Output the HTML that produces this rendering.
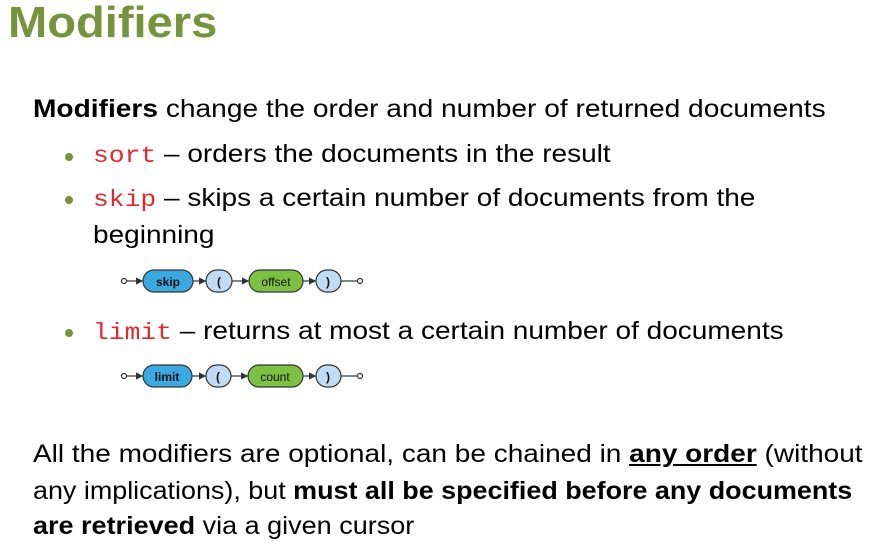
<html><head><style>
body{margin:0;width:873px;height:553px;background:#fff;font-family:"Liberation Sans",sans-serif;color:#000;position:relative;overflow:hidden}
.a{position:absolute;white-space:nowrap;font-size:25px;transform-origin:0 50%}
.m{font-family:"Liberation Mono",monospace;color:#e0282e;font-size:23.5px}
.dot{position:absolute;width:8px;height:8px;border-radius:50%;background:#77933c}
</style></head><body>
<div class="a" style="left:8px;top:-2px;font-size:44px;font-weight:bold;color:#77933c;transform:scaleX(1.07)">Modifiers</div>
<div class="a" style="left:33px;top:95px;transform:scaleX(1.125)"><b>Modifiers</b> change the order and number of returned documents</div>
<div class="dot" style="left:65px;top:153px"></div>
<div class="a" style="left:93px;top:140px;transform:scaleX(1.12)"><span class="m">sort</span> – orders the documents in the result</div>
<div class="dot" style="left:65px;top:196px"></div>
<div class="a" style="left:93px;top:184px;transform:scaleX(1.12)"><span class="m">skip</span> – skips a certain number of documents from the</div>
<div class="a" style="left:93px;top:221px;transform:scaleX(1.12)">beginning</div>
<div class="dot" style="left:65px;top:329px"></div>
<div class="a" style="left:93px;top:317px;transform:scaleX(1.12)"><span class="m">limit</span> – returns at most a certain number of documents</div>
<svg width="873" height="553" style="position:absolute;left:0;top:0" font-family="Liberation Sans" font-size="12">
<defs><marker id="ar" markerWidth="6" markerHeight="6" refX="5" refY="3" orient="auto"><path d="M0,0L6,3L0,6z" fill="#333"/></marker></defs>
<g stroke="#333" stroke-width="1.2">
<circle cx="124" cy="281" r="2.5" fill="#fff"/>
<line x1="127" y1="281" x2="142" y2="281" marker-end="url(#ar)"/>
<rect x="143" y="270" width="50" height="22" rx="11" fill="#3aa9e0"/>
<line x1="193" y1="281" x2="205" y2="281" marker-end="url(#ar)"/>
<rect x="206" y="270" width="26" height="22" rx="11" fill="#bfdcf4"/>
<line x1="232" y1="281" x2="248" y2="281" marker-end="url(#ar)"/>
<rect x="249" y="270" width="54" height="22" rx="11" fill="#7dc142"/>
<line x1="303" y1="281" x2="315" y2="281" marker-end="url(#ar)"/>
<rect x="316" y="270" width="25" height="22" rx="11" fill="#bfdcf4"/>
<line x1="341" y1="281" x2="357" y2="281"/>
<circle cx="360" cy="281" r="2.5" fill="#fff"/>
</g>
<g stroke="#333" stroke-width="1.2">
<circle cx="124" cy="376" r="2.5" fill="#fff"/>
<line x1="127" y1="376" x2="142" y2="376" marker-end="url(#ar)"/>
<rect x="143" y="365" width="49" height="22" rx="11" fill="#3aa9e0"/>
<line x1="192" y1="376" x2="205" y2="376" marker-end="url(#ar)"/>
<rect x="206" y="365" width="25" height="22" rx="11" fill="#bfdcf4"/>
<line x1="231" y1="376" x2="247" y2="376" marker-end="url(#ar)"/>
<rect x="248" y="365" width="55" height="22" rx="11" fill="#7dc142"/>
<line x1="303" y1="376" x2="315" y2="376" marker-end="url(#ar)"/>
<rect x="316" y="365" width="25" height="22" rx="11" fill="#bfdcf4"/>
<line x1="341" y1="376" x2="357" y2="376"/>
<circle cx="360" cy="376" r="2.5" fill="#fff"/>
</g>
<g text-anchor="middle" fill="#111">
<text x="168" y="286" font-weight="bold">skip</text>
<text x="219" y="286" font-weight="bold">(</text>
<text x="276" y="286">offset</text>
<text x="328" y="286" font-weight="bold">)</text>
<text x="167" y="381" font-weight="bold">limit</text>
<text x="218" y="381" font-weight="bold">(</text>
<text x="275" y="381">count</text>
<text x="328" y="381" font-weight="bold">)</text>
</g>
</svg>
<div class="a" style="left:33px;top:440px;transform:scaleX(1.12)">All the modifiers are optional, can be chained in <b><u>any order</u></b> (without</div>
<div class="a" style="left:33px;top:477px;transform:scaleX(1.076)">any implications), but <b>must all be specified before any documents</b></div>
<div class="a" style="left:33px;top:512px;transform:scaleX(1.08)"><b>are retrieved</b> via a given cursor</div>
</body></html>
